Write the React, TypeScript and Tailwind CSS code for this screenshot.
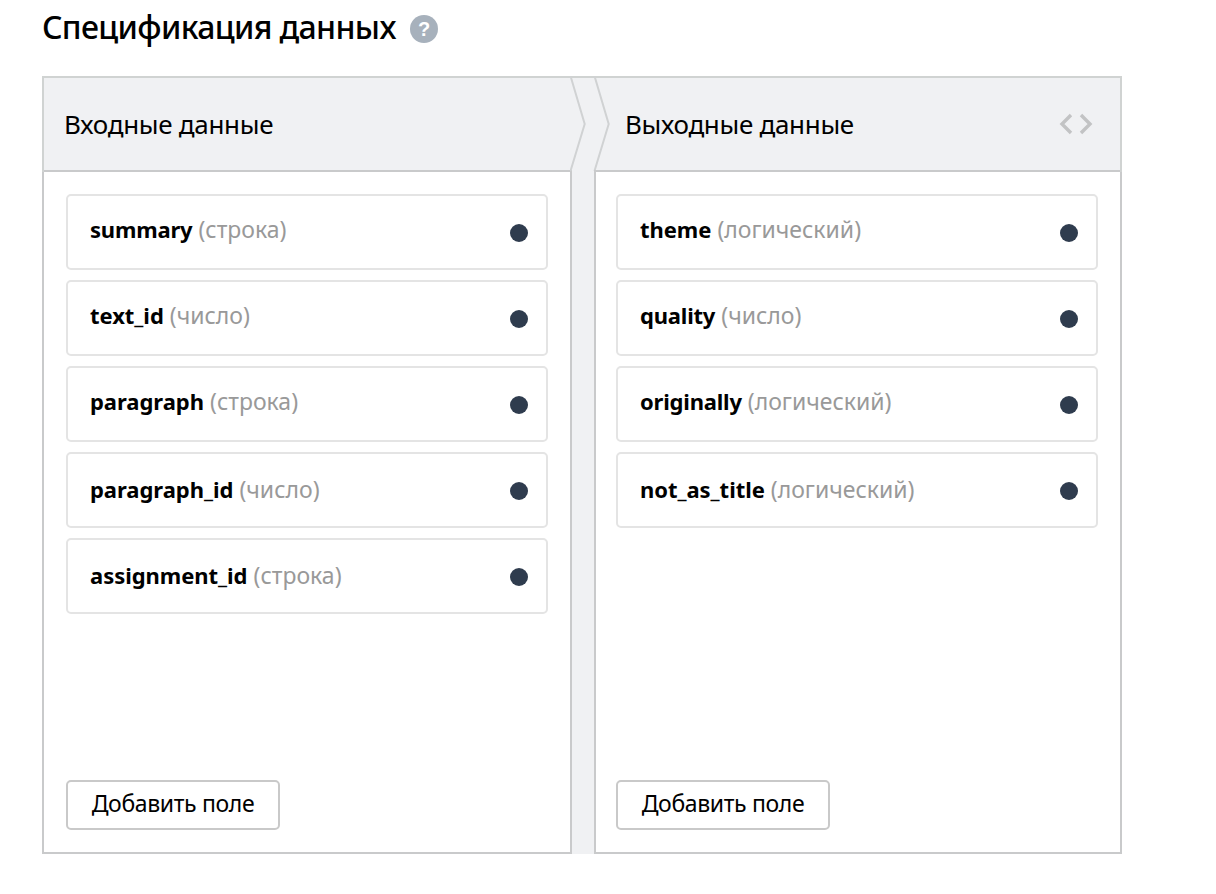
type Field = { name: string; type: string; low?: boolean; tight?: boolean };

const inputs: Field[] = [
  { name: "summary", type: "строка", tight: true },
  { name: "text_id", type: "число" },
  { name: "paragraph", type: "строка" },
  { name: "paragraph_id", type: "число", low: true },
  { name: "assignment_id", type: "строка", low: true },
];

const outputs: Field[] = [
  { name: "theme", type: "логический" },
  { name: "quality", type: "число", tight: true },
  { name: "originally", type: "логический", tight: true },
  { name: "not_as_title", type: "логический", low: true },
];

function FieldCard({ field }: { field: Field }) {
  return (
    <li className="flex h-[76px] items-center justify-between rounded-[5px] border-2 border-[#e4e4e4] bg-white pr-[18px] pl-[22px]">
      <div className={`flex items-baseline gap-[6px] leading-[30px] whitespace-nowrap ${field.low ? "pb-[3px]" : "pb-[7px]"}`}>
        <span className={`text-[22px] font-bold text-black ${field.tight ? "tracking-[-0.2px]" : "tracking-[-0.04px]"}`}>{field.name}</span>
        <span className="text-[23px] text-[#999999]">({field.type})</span>
      </div>
      <span className="mt-[2px] size-[18px] rounded-full bg-[#2f3c4e]" />
    </li>
  );
}

function Panel({ fields, className }: { fields: Field[]; className: string }) {
  return (
    <section className={`flex flex-col items-stretch justify-between border-2 border-t-0 border-[#c9cacb] bg-white pt-[22px] pb-[22px] ${className}`}>
      <ul className="flex flex-col gap-[10px]">
        {fields.map((f) => (
          <FieldCard key={f.name} field={f} />
        ))}
      </ul>
      <button className="flex h-[50px] w-[214px] items-center justify-center rounded-[5px] border-2 border-[#c9c9c9] bg-white pb-[3px] text-[23px] tracking-[-0.35px] whitespace-nowrap text-black">
        Добавить поле
      </button>
    </section>
  );
}

export default function App() {
  return (
    <main className="h-[894px] w-[1216px] overflow-hidden bg-white pl-[42px] font-['Noto_Sans',sans-serif]">
      <div className="flex h-[76px] items-start pt-[6px]">
        <h1 className="w-[368px] text-[32px] leading-[42px] font-medium tracking-[-0.65px] whitespace-nowrap text-black">Спецификация данных</h1>
        <span className="mt-[9px] flex size-7 items-center justify-center rounded-full bg-[#a7b1bc] font-['Liberation_Sans',sans-serif] text-[20px] leading-7 font-bold text-white">?</span>
      </div>
      <div className="w-[1080px] bg-[#f0f1f3]">
        <header className="flex h-24 border-2 border-b-0 border-[#d0d3d2]">
          <div className="flex w-[528px] items-center border-b-2 border-[#c9cacb] pl-[20px]">
            <h2 className="text-[26px] leading-9 tracking-[-0.3px] whitespace-nowrap text-black">Входные данные</h2>
          </div>
          <svg className="-mt-[2px] -ml-[2px] h-24 w-[42px] shrink-0" viewBox="0 0 42 96" fill="none" stroke="#d0d2d3" strokeWidth="2">
            <path d="M0.5 0L14.7 48L0.5 95M24.5 0L38.7 48L24.5 95" />
          </svg>
          <div className="-ml-[18px] flex grow items-center justify-between border-b-2 border-[#c9cacb] pr-[26px] pl-[31px]">
            <h2 className="text-[26px] leading-9 tracking-[-0.3px] whitespace-nowrap text-black">Выходные данные</h2>
            <svg className="h-6 w-9" viewBox="0 0 36 24" fill="none" stroke="#c2c3c4" strokeWidth="3.4">
              <path d="M13 3L4 12L13 21M23 3L32 12L23 21" />
            </svg>
          </div>
        </header>
        <div className="flex h-[682px] justify-between">
          <Panel fields={inputs} className="w-[530px] px-[22px]" />
          <Panel fields={outputs} className="w-[528px] pr-[22px] pl-[20px]" />
        </div>
      </div>
    </main>
  );
}
